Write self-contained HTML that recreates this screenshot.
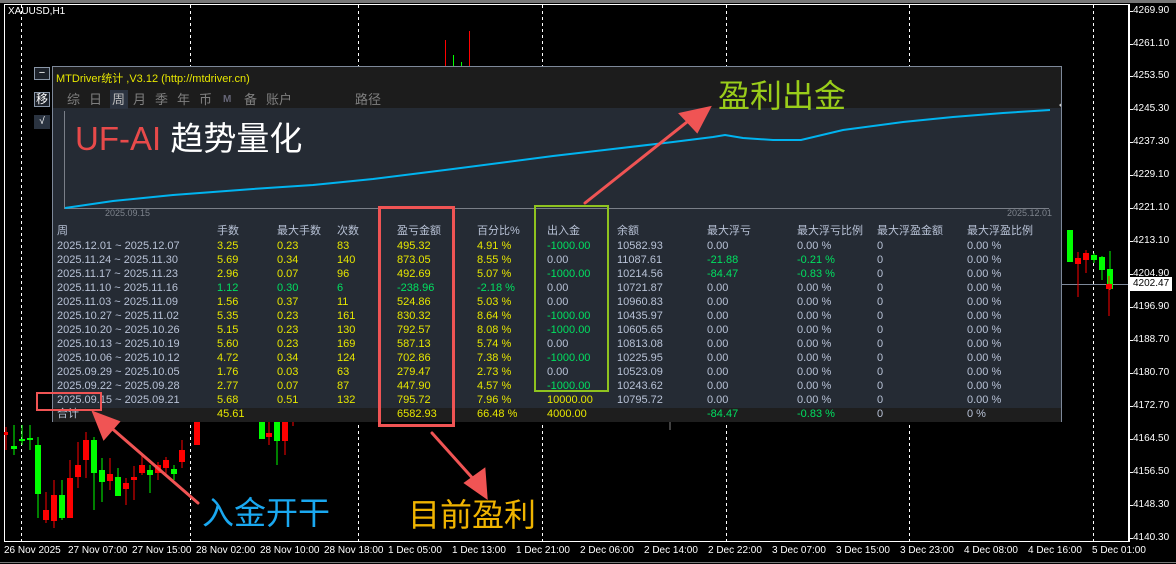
<!DOCTYPE html>
<html><head><meta charset="utf-8"><style>
*{margin:0;padding:0;box-sizing:border-box}
body{width:1176px;height:564px;background:#000;position:relative;overflow:hidden;font-family:"Liberation Sans","Noto Sans CJK SC",sans-serif}
.a{position:absolute;white-space:nowrap}
#panel{position:absolute;left:52px;top:66px;width:1010px;height:356px;border:1px solid #7d8899;background:#252b34}
.t{position:absolute;font-size:11px;line-height:14px;color:#b8c2d6;white-space:nowrap}
.y{color:#e6e600}.g{color:#00e060}
.tab{position:absolute;top:24px;font-size:13px;color:#7f7f7f;line-height:18px}
.px{position:absolute;left:1133px;font-size:10px;color:#fff;line-height:12px}
.tl{position:absolute;top:545px;font-size:10px;color:#fff;line-height:12px}
</style></head><body>
<div class="a" style="left:0;top:0;width:1176px;height:3px;background:#777"></div>
<svg class="a" style="left:0;top:0" width="1176" height="564">
<rect x="4.5" y="4.5" width="1124" height="537" fill="none" stroke="#fff"/>
<g stroke="#fff" stroke-dasharray="3,3" stroke-width="1">
<line x1="21.5" y1="5" x2="21.5" y2="541"/><line x1="190.5" y1="5" x2="190.5" y2="541"/><line x1="358.5" y1="5" x2="358.5" y2="541"/><line x1="542.5" y1="5" x2="542.5" y2="541"/><line x1="726.5" y1="5" x2="726.5" y2="541"/><line x1="909.5" y1="5" x2="909.5" y2="541"/><line x1="1093.5" y1="5" x2="1093.5" y2="541"/>
</g>
<line x1="1062" y1="284.5" x2="1128" y2="284.5" stroke="#7d8899"/>
<g stroke="#fff"><line x1="1129.5" y1="4" x2="1129.5" y2="542"/>
<line x1="1129" y1="11.5" x2="1133" y2="11.5"/><line x1="1129" y1="44.5" x2="1133" y2="44.5"/><line x1="1129" y1="76.5" x2="1133" y2="76.5"/><line x1="1129" y1="109.5" x2="1133" y2="109.5"/><line x1="1129" y1="142.5" x2="1133" y2="142.5"/><line x1="1129" y1="175.5" x2="1133" y2="175.5"/><line x1="1129" y1="208.5" x2="1133" y2="208.5"/><line x1="1129" y1="241.5" x2="1133" y2="241.5"/><line x1="1129" y1="274.5" x2="1133" y2="274.5"/><line x1="1129" y1="307.5" x2="1133" y2="307.5"/><line x1="1129" y1="340.5" x2="1133" y2="340.5"/><line x1="1129" y1="373.5" x2="1133" y2="373.5"/><line x1="1129" y1="406.5" x2="1133" y2="406.5"/><line x1="1129" y1="439.5" x2="1133" y2="439.5"/><line x1="1129" y1="472.5" x2="1133" y2="472.5"/><line x1="1129" y1="505.5" x2="1133" y2="505.5"/><line x1="1129" y1="538.5" x2="1133" y2="538.5"/></g>
<line x1="445.5" y1="40" x2="445.5" y2="66" stroke="#f00"/><line x1="469.5" y1="31" x2="469.5" y2="66" stroke="#f00"/><line x1="453.5" y1="55" x2="453.5" y2="66" stroke="#0f0"/><line x1="461.5" y1="62" x2="461.5" y2="66" stroke="#0f0"/>
<g>
<line x1="1070" y1="230" x2="1070" y2="262" stroke="#0f0"/><rect x="1067" y="230" width="6" height="32" fill="#0f0"/>
<line x1="1078" y1="252" x2="1078" y2="297" stroke="#f00"/><rect x="1075" y="258" width="6" height="6" fill="#f00"/>
<line x1="1086" y1="250" x2="1086" y2="273" stroke="#f00"/><rect x="1083" y="253" width="6" height="7" fill="#f00"/>
<line x1="1094" y1="253" x2="1094" y2="263" stroke="#0f0"/><rect x="1091" y="255" width="6" height="5" fill="#0f0"/>
<line x1="1102" y1="256" x2="1102" y2="280" stroke="#0f0"/><rect x="1099" y="257" width="6" height="13" fill="#0f0"/>
<line x1="1110" y1="251" x2="1110" y2="290" stroke="#0f0"/><rect x="1107" y="269" width="6" height="20" fill="#0f0"/>
<line x1="1109" y1="276" x2="1109" y2="316" stroke="#f00"/><rect x="1106" y="284" width="6" height="5" fill="#f00"/>
</g>
<g>
<line x1="6" y1="427" x2="6" y2="450" stroke="#f00"/><rect x="4" y="432" width="4" height="3" fill="#f00"/>
<line x1="14" y1="425" x2="14" y2="455" stroke="#0f0"/><rect x="11" y="446" width="6" height="3" fill="#0f0"/>
<line x1="22" y1="425" x2="22" y2="445" stroke="#0f0"/><rect x="19" y="439" width="6" height="2" fill="#0f0"/>
<line x1="30" y1="425" x2="30" y2="450" stroke="#0f0"/><rect x="27" y="438" width="6" height="2" fill="#0f0"/>
<line x1="38" y1="437" x2="38" y2="518" stroke="#0f0"/><rect x="35" y="445" width="6" height="49" fill="#0f0"/>
<line x1="46" y1="492" x2="46" y2="523" stroke="#f00"/><rect x="43" y="510" width="6" height="10" fill="#f00"/>
<line x1="54" y1="480" x2="54" y2="528" stroke="#f00"/><rect x="51" y="495" width="6" height="26" fill="#f00"/>
<line x1="62" y1="480" x2="62" y2="520" stroke="#0f0"/><rect x="59" y="495" width="6" height="23" fill="#0f0"/>
<line x1="70" y1="460" x2="70" y2="518" stroke="#f00"/><rect x="67" y="478" width="6" height="40" fill="#f00"/>
<line x1="78" y1="442" x2="78" y2="488" stroke="#f00"/><rect x="75" y="465" width="6" height="12" fill="#f00"/>
<line x1="86" y1="432" x2="86" y2="478" stroke="#f00"/><rect x="83" y="440" width="6" height="20" fill="#f00"/>
<line x1="94" y1="437" x2="94" y2="510" stroke="#0f0"/><rect x="91" y="440" width="6" height="33" fill="#0f0"/>
<line x1="102" y1="458" x2="102" y2="502" stroke="#0f0"/><rect x="99" y="470" width="6" height="12" fill="#0f0"/>
<line x1="110" y1="458" x2="110" y2="490" stroke="#f00"/><rect x="107" y="474" width="6" height="7" fill="#f00"/>
<line x1="118" y1="468" x2="118" y2="495" stroke="#0f0"/><rect x="115" y="477" width="6" height="19" fill="#0f0"/>
<line x1="126" y1="478" x2="126" y2="505" stroke="#f00"/><rect x="123" y="483" width="6" height="6" fill="#f00"/>
<line x1="134" y1="466" x2="134" y2="500" stroke="#f00"/><rect x="131" y="477" width="6" height="3" fill="#f00"/>
<line x1="142" y1="455" x2="142" y2="475" stroke="#f00"/><rect x="139" y="465" width="6" height="8" fill="#f00"/>
<line x1="150" y1="465" x2="150" y2="493" stroke="#0f0"/><rect x="147" y="470" width="6" height="5" fill="#0f0"/>
<line x1="158" y1="462" x2="158" y2="480" stroke="#f00"/><rect x="155" y="465" width="6" height="8" fill="#f00"/>
<line x1="166" y1="457" x2="166" y2="475" stroke="#f00"/><rect x="163" y="460" width="6" height="8" fill="#f00"/>
<line x1="174" y1="465" x2="174" y2="480" stroke="#0f0"/><rect x="171" y="469" width="6" height="5" fill="#0f0"/>
<line x1="182" y1="440" x2="182" y2="468" stroke="#f00"/><rect x="179" y="450" width="6" height="12" fill="#f00"/>
<line x1="197" y1="421" x2="197" y2="445" stroke="#f00"/><rect x="194" y="421" width="6" height="24" fill="#f00"/>
<rect x="259" y="421" width="6" height="18" fill="#0f0"/><line x1="269" y1="421" x2="269" y2="445" stroke="#f00"/><rect x="266" y="433" width="6" height="4" fill="#f00"/>
<line x1="277" y1="421" x2="277" y2="465" stroke="#0f0"/><rect x="274" y="421" width="6" height="20" fill="#0f0"/>
<line x1="285" y1="421" x2="285" y2="455" stroke="#f00"/><rect x="282" y="421" width="6" height="20" fill="#f00"/>
<line x1="293" y1="421" x2="293" y2="426" stroke="#f00"/>
<line x1="670" y1="421" x2="670" y2="430" stroke="#fff" opacity=".5"/>
</g>
<line x1="0" y1="562.5" x2="1176" y2="562.5" stroke="#777"/>
</svg>
<div class="a" style="left:8px;top:6px;font-size:10px;color:#fff">XAUUSD,H1</div>
<div class="px" style="top:5px">4269.90</div><div class="px" style="top:38px">4261.10</div><div class="px" style="top:70px">4253.50</div><div class="px" style="top:103px">4245.30</div><div class="px" style="top:136px">4237.30</div><div class="px" style="top:169px">4229.10</div><div class="px" style="top:202px">4221.10</div><div class="px" style="top:235px">4213.10</div><div class="px" style="top:268px">4204.90</div><div class="px" style="top:301px">4196.90</div><div class="px" style="top:334px">4188.70</div><div class="px" style="top:367px">4180.70</div><div class="px" style="top:400px">4172.70</div><div class="px" style="top:433px">4164.50</div><div class="px" style="top:466px">4156.50</div><div class="px" style="top:499px">4148.30</div><div class="px" style="top:532px">4140.30</div>
<div class="a" style="left:1130px;top:277px;width:42px;height:14px;background:#fff;color:#000;font-size:10px;line-height:14px;padding-left:3px">4202.47</div>
<div class="tl" style="left:4px">26 Nov 2025</div><div class="tl" style="left:68px">27 Nov 07:00</div><div class="tl" style="left:132px">27 Nov 15:00</div><div class="tl" style="left:196px">28 Nov 02:00</div><div class="tl" style="left:260px">28 Nov 10:00</div><div class="tl" style="left:324px">28 Nov 18:00</div><div class="tl" style="left:388px">1 Dec 05:00</div><div class="tl" style="left:452px">1 Dec 13:00</div><div class="tl" style="left:516px">1 Dec 21:00</div><div class="tl" style="left:580px">2 Dec 06:00</div><div class="tl" style="left:644px">2 Dec 14:00</div><div class="tl" style="left:708px">2 Dec 22:00</div><div class="tl" style="left:772px">3 Dec 07:00</div><div class="tl" style="left:836px">3 Dec 15:00</div><div class="tl" style="left:900px">3 Dec 23:00</div><div class="tl" style="left:964px">4 Dec 08:00</div><div class="tl" style="left:1028px">4 Dec 16:00</div><div class="tl" style="left:1092px">5 Dec 01:00</div>

<div class="a" style="left:34px;top:67px;width:16px;height:13px;border:1px solid #8a97a8;background:#1c2129;color:#fff;font-size:11px;line-height:10px;text-align:center">−</div>
<div class="a" style="left:34px;top:92px;width:16px;height:15px;border:1px solid #8a97a8;background:#1c2129;color:#fff;font-size:12px;line-height:13px;text-align:center">移</div>
<div class="a" style="left:34px;top:115px;width:16px;height:14px;background:#2a3340;color:#fff;font-size:10px;line-height:14px;text-align:center">√</div>

<div id="panel">
 <div class="a" style="left:0;top:0;width:1008px;height:41px;background:#1c1c1c"></div>
 <div class="a" style="left:3px;top:3px;font-size:11px;color:#e6e600">MTDriver统计 ,V3.12 (http://mtdriver.cn)</div>
 <div class="a" style="left:57px;top:23px;width:18px;height:19px;background:#2b3340"></div>
 <div class="tab" style="left:14px">综</div><div class="tab" style="left:36px">日</div><div class="tab" style="left:59px;color:#bbb">周</div><div class="tab" style="left:80px">月</div><div class="tab" style="left:102px">季</div><div class="tab" style="left:124px">年</div><div class="tab" style="left:146px">币</div><div class="tab" style="left:170px;font-size:10px;color:#667;font-weight:bold">M</div><div class="tab" style="left:191px">备</div><div class="tab" style="left:213px">账户</div><div class="tab" style="left:302px">路径</div>
 <svg class="a" style="left:0;top:0" width="1008" height="160">
  <line x1="11.5" y1="44" x2="11.5" y2="141" stroke="#7a7f88"/><line x1="11" y1="141.5" x2="996" y2="141.5" stroke="#7a7f88"/>
  <polyline fill="none" stroke="#00b4f0" stroke-width="2" points="12,141 60,134 120,128 200,122 260,118 320,112 400,102 500,89 560,82 620,75 660,70 672,68 690,71 720,73 748,73 790,63 850,55 900,50 950,46 997,43"/>
  <polygon points="1006,38 1010,35 1010,42" fill="#ccc"/>
 </svg>
 <div class="a" style="left:52px;top:141px;font-size:9px;color:#7d838c">2025.09.15</div>
 <div class="a" style="left:954px;top:141px;font-size:9px;color:#7d838c">2025.12.01</div>
 <div class="a" style="left:22px;top:52px;font-size:33px;line-height:40px;color:#e84a4a">UF-AI <span style="color:#fff">趋势量化</span></div>
 <div class="a" style="left:0;top:341px;width:1008px;height:14px;background:#1e1e1e"></div>
</div>
<div id="tb" class="a" style="left:0;top:0"></div>

<div class="a" style="left:378px;top:206px;width:77px;height:221px;border:3px solid #f05454"></div>
<div class="a" style="left:534px;top:205px;width:75px;height:187px;border:2px solid #8fc31f"></div>
<div class="a" style="left:36px;top:392px;width:66px;height:19px;border:2px solid #f05454"></div>
<svg class="a" style="left:0;top:0" width="1176" height="564">
 <g fill="#f05454" stroke="#f05454" stroke-width="3" stroke-linecap="round">
  <line x1="585" y1="203" x2="692" y2="118"/><polygon points="709,108 681,114 697,131"/>
  <line x1="198" y1="503" x2="108" y2="425"/><polygon points="94,413 104,438 118,422"/>
  <line x1="432" y1="433" x2="476" y2="482"/><polygon points="486,497 484,470 466,483"/>
 </g>
</svg>
<div class="a" style="left:718px;top:76px;font-size:32px;line-height:40px;color:#9acd1a">盈利出金</div>
<div class="a" style="left:202px;top:493px;font-size:32px;line-height:40px;color:#1aa8f0">入金开干</div>
<div class="a" style="left:408px;top:495px;font-size:32px;line-height:40px;color:#f0b400">目前盈利</div>

<script>
var rows=[
["2025.12.01 ~ 2025.12.07","3.25","0.23","83","495.32","4.91 %","-1000.00","10582.93","0.00","0.00 %"],
["2025.11.24 ~ 2025.11.30","5.69","0.34","140","873.05","8.55 %","0.00","11087.61","-21.88","-0.21 %"],
["2025.11.17 ~ 2025.11.23","2.96","0.07","96","492.69","5.07 %","-1000.00","10214.56","-84.47","-0.83 %"],
["2025.11.10 ~ 2025.11.16","1.12","0.30","6","-238.96","-2.18 %","0.00","10721.87","0.00","0.00 %"],
["2025.11.03 ~ 2025.11.09","1.56","0.37","11","524.86","5.03 %","0.00","10960.83","0.00","0.00 %"],
["2025.10.27 ~ 2025.11.02","5.35","0.23","161","830.32","8.64 %","-1000.00","10435.97","0.00","0.00 %"],
["2025.10.20 ~ 2025.10.26","5.15","0.23","130","792.57","8.08 %","-1000.00","10605.65","0.00","0.00 %"],
["2025.10.13 ~ 2025.10.19","5.60","0.23","169","587.13","5.74 %","0.00","10813.08","0.00","0.00 %"],
["2025.10.06 ~ 2025.10.12","4.72","0.34","124","702.86","7.38 %","-1000.00","10225.95","0.00","0.00 %"],
["2025.09.29 ~ 2025.10.05","1.76","0.03","63","279.47","2.73 %","0.00","10523.09","0.00","0.00 %"],
["2025.09.22 ~ 2025.09.28","2.77","0.07","87","447.90","4.57 %","-1000.00","10243.62","0.00","0.00 %"],
["2025.09.15 ~ 2025.09.21","5.68","0.51","132","795.72","7.96 %","10000.00","10795.72","0.00","0.00 %"]];
var X=[57,217,277,337,397,477,547,617,707,797,877,967],h="";
function c(x,y,t,cl){h+='<div class="t '+(cl||'')+'" style="left:'+x+'px;top:'+y+'px">'+t+'</div>';}
var hd=["周","手数","最大手数","次数","盈亏金额","百分比%","出入金","余额","最大浮亏","最大浮亏比例","最大浮盈金额","最大浮盈比例"];
hd.forEach(function(t,i){c(X[i],224,t)});
rows.forEach(function(r,k){var y=239+k*14,neg=r[4][0]=='-';
c(X[0],y,r[0]);for(var i=1;i<6;i++)c(X[i],y,r[i],neg?'g':'y');
c(X[6],y,r[6],r[6][0]=='-'?'g':(r[6]=='0.00'?'':'y'));c(X[7],y,r[7]);
c(X[8],y,r[8],r[8][0]=='-'?'g':'');c(X[9],y,r[9],r[9][0]=='-'?'g':'');c(X[10],y,"0");c(X[11],y,"0.00 %");});
var y=407;c(X[0],y,"合计");c(X[1],y,"45.61","y");c(X[4],y,"6582.93","y");c(X[5],y,"66.48 %","y");c(X[6],y,"4000.00","y");c(X[8],y,"-84.47","g");c(X[9],y,"-0.83 %","g");c(X[10],y,"0");c(X[11],y,"0 %");
document.getElementById('tb').innerHTML=h;
</script>
</body></html>
